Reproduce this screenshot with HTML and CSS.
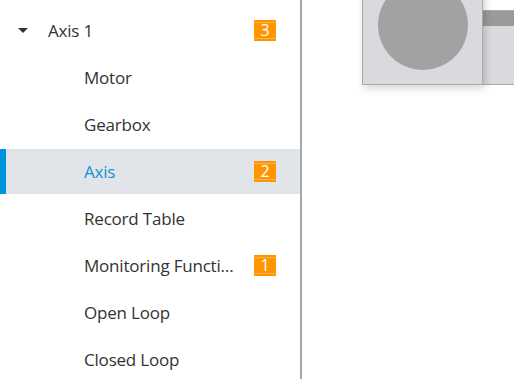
FILE: index.html
```html
<!DOCTYPE html>
<html lang="en">
<head>
<meta charset="UTF-8">
<link rel="stylesheet" href="styles.css">
</head>
<body>
<div class="layout">
    <nav class="tree">
        <div class="node parent">
            <span class="caret"></span>
            <span class="label">Axis 1</span>
            <span class="badge">3</span>
        </div>
        <div class="node child"><span class="label">Motor</span></div>
        <div class="node child"><span class="label">Gearbox</span></div>
        <div class="node child selected">
            <span class="label">Axis</span>
            <span class="badge">2</span>
        </div>
        <div class="node child"><span class="label">Record Table</span></div>
        <div class="node child">
            <span class="label">Monitoring Functions</span>
            <span class="badge">1</span>
        </div>
        <div class="node child"><span class="label">Open Loop</span></div>
        <div class="node child"><span class="label">Closed Loop</span></div>
    </nav>

    <main class="canvas">
        <div class="block rail">
            <div class="rail-bar"></div>
        </div>
        <div class="block motor">
            <div class="disc"></div>
        </div>
    </main>
</div>
</body>
</html>
```

FILE: styles.css
```css
html,
body {
    margin: 0;
    height: 100%;
    background: #fff;
}

body {
    font-family: 'Open Sans', 'Noto Sans', sans-serif;
    font-size: 17px;
    color: #333;
}

.layout {
    display: flex;
    height: 100%;
}

.tree {
    width: 300px;
    flex: none;
    border-right: 2px solid #a3a6aa;
    padding-top: 7px;
    box-sizing: content-box;
}

.node {
    display: flex;
    align-items: center;
    gap: 12px;
    height: 47px;
    padding-right: 24px;
    box-sizing: border-box;
}

.node .label {
    flex: 1;
    min-width: 0;
    white-space: nowrap;
    overflow: hidden;
    text-overflow: ellipsis;
    letter-spacing: -0.2px;
}

.parent {
    padding-left: 18px;
}

.parent .caret {
    width: 0;
    height: 0;
    border-left: 5px solid transparent;
    border-right: 5px solid transparent;
    border-top: 5px solid #333;
    margin-right: 8px;
}

.child {
    padding-left: 84px;
}

.selected {
    background: #e1e4e8;
    color: #1591d6;
    height: 45px;
    margin: 1px 0;
    box-shadow: inset 6px 0 0 #0093dd;
}

.badge {
    flex: none;
    width: 22px;
    height: 21px;
    line-height: 21px;
    text-align: center;
    background: #ff9500;
    color: #fff;
    font-size: 16px;
    box-shadow: inset 0 2px 0 #ff9500, inset 0 3px 0 #ffb347, inset 0 -2px 0 #ff9500, inset 0 -3px 0 #ffb347;
}

.canvas {
    position: relative;
    flex: 1;
    overflow: hidden;
}

.block {
    position: absolute;
    background: #d8dade;
    border: 1px solid #a8abae;
    box-sizing: border-box;
}

.motor {
    left: 60px;
    top: -40px;
    width: 121px;
    height: 125px;
    display: flex;
    align-items: flex-end;
    justify-content: center;
    padding-bottom: 14px;
    box-shadow: 2px 3px 8px rgba(0, 0, 0, 0.18);
}

.disc {
    width: 90px;
    height: 90px;
    border-radius: 50%;
    background: #a2a2a2;
}

.rail {
    left: 178px;
    top: 10px;
    width: 60px;
    height: 75px;
}

.rail-bar {
    height: 15px;
    background: #9a9a9a;
}
```
